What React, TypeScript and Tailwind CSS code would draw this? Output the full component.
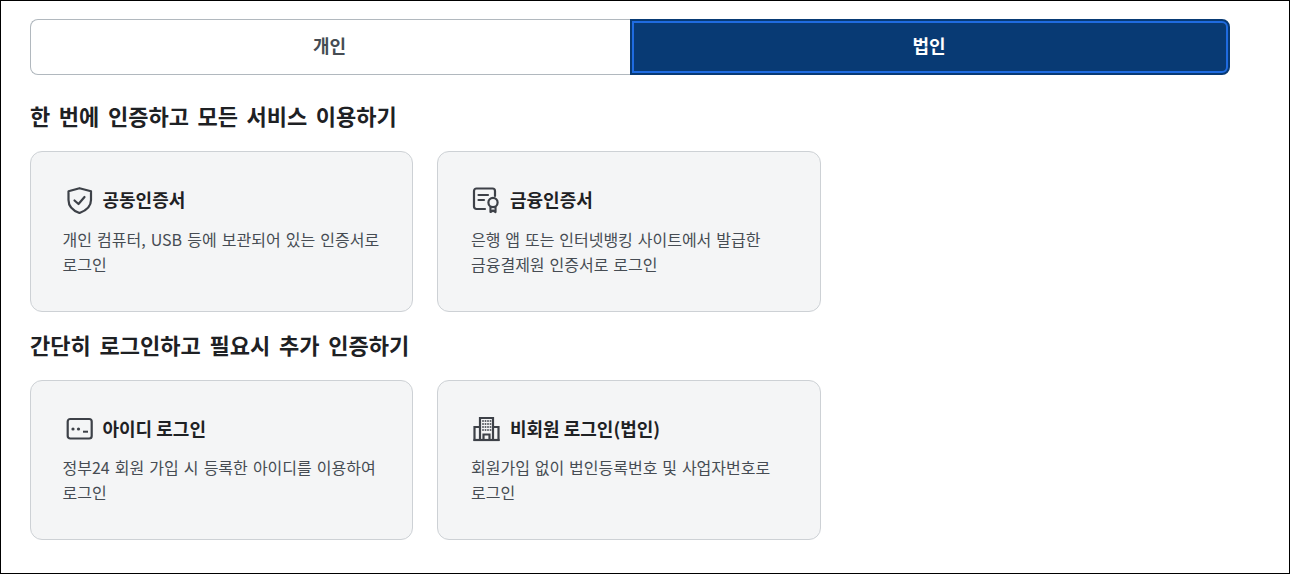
function Shield() {
  return (
    <svg width="28" height="28" viewBox="0 0 28 28" fill="none" stroke="#3d4148" strokeWidth="2.2" strokeLinejoin="round" strokeLinecap="round">
      <path d="M14.5 2.2 L26 5.2 V14 C26 20 21.5 24.5 14.5 27 C7.5 24.5 3.5 20 3.5 14 V5.2 Z" />
      <path d="M9.5 14.5 L13.5 18 L19.5 11" />
    </svg>
  );
}
function Cert() {
  return (
    <svg width="28" height="28" viewBox="0 0 28 28" fill="none" stroke="#3d4148" strokeWidth="2.2" strokeLinejoin="round" strokeLinecap="round">
      <path d="M13 23 H4.5 C3 23 2 22 2 20.5 V5 C2 3.5 3 2.5 4.5 2.5 H20.5 C22 2.5 23 3.5 23 5 V10" />
      <path d="M6.5 9 H16" />
      <path d="M6.5 14 H12" />
      <circle cx="21" cy="16.5" r="4.6" />
      <path d="M18.5 21 V26 L21 24.5 L23.5 26 V21" />
    </svg>
  );
}
function IdIcon() {
  return (
    <svg width="28" height="28" viewBox="0 0 28 28" fill="none">
      <rect x="2.7" y="4" width="24" height="19.5" rx="2.5" stroke="#3d4148" strokeWidth="2.2" />
      <circle cx="8" cy="14" r="1.6" fill="#3d4148" />
      <circle cx="13.5" cy="14" r="1.6" fill="#3d4148" />
      <path d="M18 16.7 H23" stroke="#3d4148" strokeWidth="2" />
    </svg>
  );
}
function Building() {
  const dots: [number, number][] = [];
  for (const y of [6, 9, 12, 15]) for (const x of [11, 13.5, 16, 18.5]) dots.push([x, y]);
  return (
    <svg width="28" height="28" viewBox="0 0 28 28" fill="none" stroke="#3d4148" strokeWidth="2.2">
      <path d="M8 25 V3 H21 V25" />
      <path d="M8 12 H2.5 V25 H26.5 V12 H21" />
      <path d="M1.5 25 H27.5" />
      <path d="M11.5 25 V19.5 H17.5 V25" />
      {dots.map(([x, y]) => (
        <rect key={`${x}-${y}`} x={x - 0.8} y={y - 0.8} width="1.6" height="1.6" fill="#3d4148" stroke="none" />
      ))}
    </svg>
  );
}
function Card({ icon, title, lines, h, second, lower }: { icon: React.ReactNode; title: string; lines: string[]; h: string; second?: boolean; lower?: boolean }) {
  return (
    <div className={`${h} ${second ? "w-[384px] pl-[32px]" : "w-[383.4px] pl-[31.5px]"} rounded-[12px] border border-[#cdd1d5] bg-[#f4f5f6] pr-4 pt-[32px]`}>
      <div className="flex items-center gap-[10px] h-[30px]">
        <span className="ml-[2px] mt-[2px] w-[28px] h-[28px] shrink-0">{icon}</span>
        <span className="text-[18px] font-bold text-[#1e2124]">{title}</span>
      </div>
      <p className={`${lower ? "mt-[12px]" : "mt-[13px]"} ${second ? "ml-[1px] [word-spacing:1.3px]" : "[word-spacing:1.5px]"} text-[16px] leading-[25px] text-[#464c53]`}>
        {lines.map((l) => (
          <span key={l} className="block whitespace-nowrap">{l}</span>
        ))}
      </p>
    </div>
  );
}
export default function App() {
  return (
    <div
      className="w-[1290px] h-[574px] border border-black bg-white pl-[29px] pt-[18px] overflow-hidden box-border"
      style={{ fontFamily: '"Noto Sans CJK KR", "Noto Sans", sans-serif' }}
    >
      <div className="flex w-[1200px] h-[56px]">
        <button className="w-[600px] pb-[3px] pr-[2px] rounded-l-[8px] border border-r-0 border-[#b1b8be] bg-white text-[18px] font-bold text-[#464c53]">개인</button>
        <button className="w-[600px] rounded-r-[8px] bg-[#083a74] border-[2px] border-[#083a74] text-[18px] font-bold text-white outline-none">
          <span className="flex h-full pb-[3px] pr-[2px] items-center justify-center rounded-r-[6px] border-[2px] border-[#1f6be0]">법인</span>
        </button>
      </div>
      <h2 className="mt-[24px] h-[32px] leading-[32px] text-[22px] font-bold text-[#1e2124] [word-spacing:3.6px]">한 번에 인증하고 모든 서비스 이용하기</h2>
      <div className="mt-[20px] flex gap-[23.6px]">
        <Card h="h-[161px]" icon={<Shield />} title="공동인증서" lines={["개인 컴퓨터, USB 등에 보관되어 있는 인증서로", "로그인"]} />
        <Card second h="h-[161px]" icon={<Cert />} title="금융인증서" lines={["은행 앱 또는 인터넷뱅킹 사이트에서 발급한", "금융결제원 인증서로 로그인"]} />
      </div>
      <h2 className="mt-[16px] h-[32px] leading-[32px] text-[22px] font-bold text-[#1e2124] [word-spacing:3.8px]">간단히 로그인하고 필요시 추가 인증하기</h2>
      <div className="mt-[20px] flex gap-[23.6px]">
        <Card lower h="h-[160px]" icon={<IdIcon />} title="아이디 로그인" lines={["정부24 회원 가입 시 등록한 아이디를 이용하여", "로그인"]} />
        <Card lower second h="h-[160px]" icon={<Building />} title="비회원 로그인(법인)" lines={["회원가입 없이 법인등록번호 및 사업자번호로", "로그인"]} />
      </div>
    </div>
  );
}
